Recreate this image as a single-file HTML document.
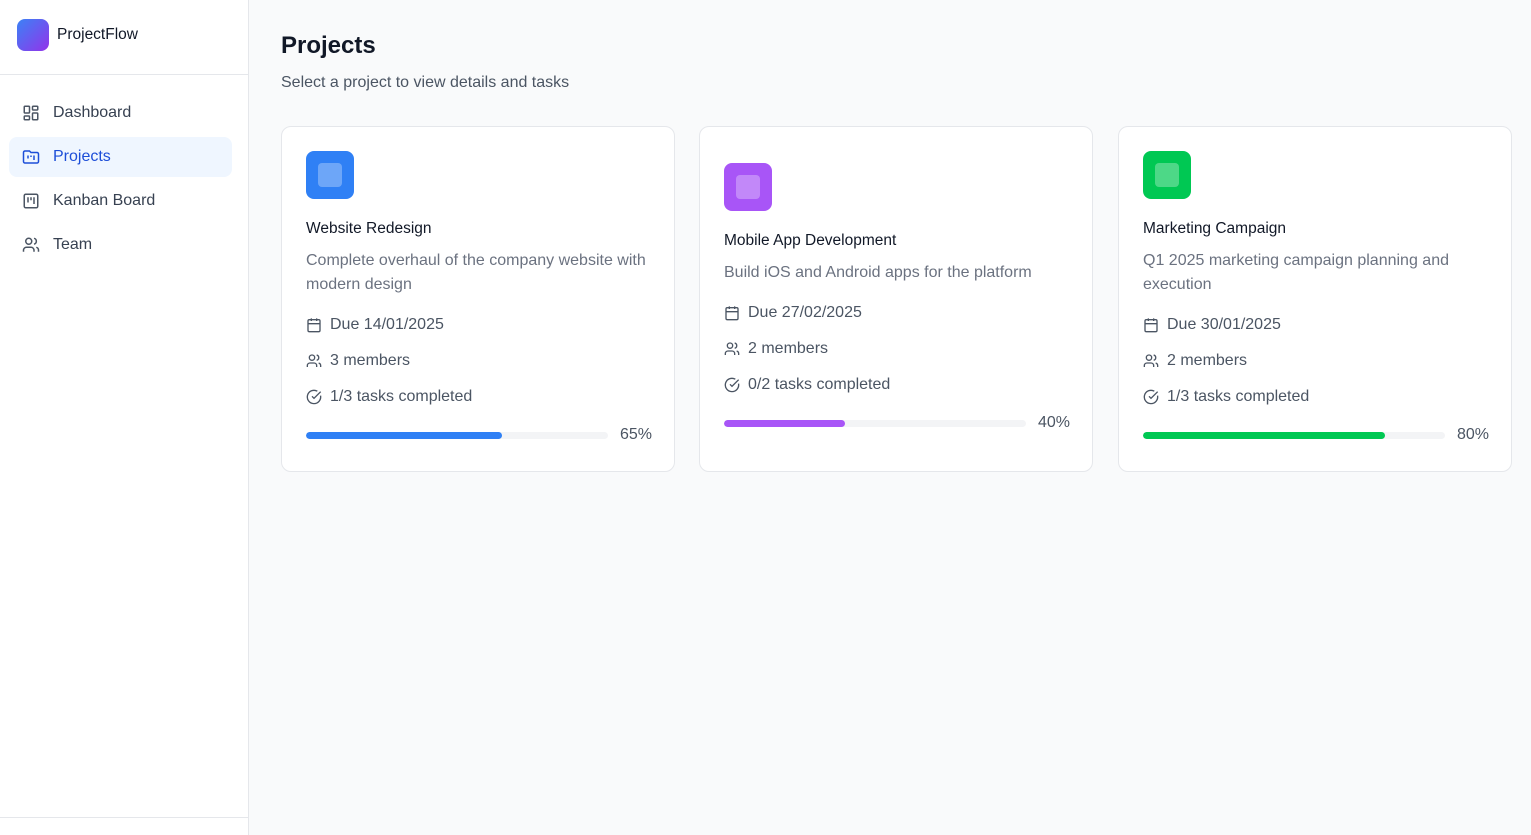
<!DOCTYPE html>
<html><head><style>
*{box-sizing:border-box;margin:0;padding:0}
body{width:1531px;height:835px;overflow:hidden;background:#f9fafb;font-family:"Liberation Sans",sans-serif;position:relative;color:#111827}
.side{position:absolute;left:0;top:0;width:249px;height:835px;background:#fff;border-right:1px solid #e5e7eb}
.logo{height:75px;border-bottom:1px solid #e5e7eb;display:flex;align-items:center;padding-left:17px;padding-bottom:4px}
.logo .sq{width:32px;height:32px;border-radius:8px;background:linear-gradient(135deg,#3b82f6,#9333ea);margin-right:8px}
.logo span{font-size:15.5px;color:#111827}
.nav{padding:18px 16px 17px 9px}
.item{height:40px;display:flex;align-items:center;padding-left:13px;margin-bottom:4px;border-radius:8px;font-size:16px;color:#374151}
.item svg{margin-right:13px}
.item.act{background:#eff6ff;color:#1d4ed8}
.foot{position:absolute;left:0;bottom:17px;width:248px;border-top:1px solid #e5e7eb}
.main{position:absolute;left:281px;top:0}
h1{font-size:24px;font-weight:600;position:absolute;top:32px;white-space:nowrap}
.sub{position:absolute;top:74px;font-size:16px;color:#4b5563;white-space:nowrap}
.card{position:absolute;top:126px;width:394px;height:346px;background:#fff;border:1px solid #e5e7eb;border-radius:10px;padding:24px 24px 0}
.ic{width:48px;height:48px;border-radius:8px;display:flex;align-items:center;justify-content:center;margin-bottom:20px}
.ic div{width:24px;height:24px;border-radius:4px;background:rgba(255,255,255,.3)}
.t{font-size:15.5px;line-height:20px;color:#111827;margin-bottom:10px}
.d{font-size:16px;color:#6b7280;line-height:24px;margin-bottom:10px}
.m{font-size:16px;color:#4b5563;height:36px;display:flex;align-items:center}
.m svg{margin-right:8px}
.pr{display:flex;align-items:center;margin-top:6px;height:28px}
.bar{width:302px;height:7px;border-radius:4px;background:#f3f4f6;margin-right:12px;overflow:hidden}
.bar div{height:100%;border-radius:4px}
.pct{font-size:16px;color:#4b5563;width:30px;text-align:right}
</style></head><body>
<div class="side">
<div class="logo"><div class="sq"></div><span>ProjectFlow</span></div>
<div class="nav">
<div class="item"><svg width="18" height="18" viewBox="0 0 24 24" fill="none" stroke="#4b5563" stroke-width="2"><rect x="3" y="3" width="7" height="9" rx="1"/><rect x="14" y="3" width="7" height="5" rx="1"/><rect x="14" y="12" width="7" height="9" rx="1"/><rect x="3" y="16" width="7" height="5" rx="1"/></svg>Dashboard</div>
<div class="item act"><svg width="18" height="18" viewBox="0 0 24 24" fill="none" stroke="#1d4ed8" stroke-width="2"><path d="M4 20h16a2 2 0 0 0 2-2V8a2 2 0 0 0-2-2h-8L10 4H4a2 2 0 0 0-2 2v12a2 2 0 0 0 2 2z"/><path d="M8 10v4M12 10v2M16 10v6"/></svg>Projects</div>
<div class="item"><svg width="18" height="18" viewBox="0 0 24 24" fill="none" stroke="#4b5563" stroke-width="2"><rect x="3" y="3" width="18" height="18" rx="2"/><path d="M8 7v7M12 7v4M16 7v9"/></svg>Kanban Board</div>
<div class="item"><svg width="18" height="18" viewBox="0 0 24 24" fill="none" stroke="#4b5563" stroke-width="2"><path d="M16 21v-2a4 4 0 0 0-4-4H6a4 4 0 0 0-4 4v2"/><circle cx="9" cy="7" r="4"/><path d="M22 21v-2a4 4 0 0 0-3-3.9M16 3.1a4 4 0 0 1 0 7.8"/></svg>Team</div>
</div>
<div class="foot"></div>
</div>
<div class="main"><h1>Projects</h1><div class="sub">Select a project to view details and tasks</div></div>

<div class="card" style="left:281px">
<div class="ic" style="background:#2f80f5"><div></div></div>
<div class="t">Website Redesign</div>
<div class="d">Complete overhaul of the company website with modern design</div>
<div class="m"><svg width="16" height="16" viewBox="0 0 24 24" fill="none" stroke="#4b5563" stroke-width="2"><rect x="3" y="4" width="18" height="18" rx="2"/><path d="M16 2v4M8 2v4M3 10h18"/></svg>Due 14/01/2025</div>
<div class="m"><svg width="16" height="16" viewBox="0 0 24 24" fill="none" stroke="#4b5563" stroke-width="2"><path d="M16 21v-2a4 4 0 0 0-4-4H6a4 4 0 0 0-4 4v2"/><circle cx="9" cy="7" r="4"/><path d="M22 21v-2a4 4 0 0 0-3-3.9M16 3.1a4 4 0 0 1 0 7.8"/></svg>3 members</div>
<div class="m"><svg width="16" height="16" viewBox="0 0 24 24" fill="none" stroke="#4b5563" stroke-width="2"><path d="M21.8 10A10 10 0 1 1 17 3.3"/><path d="M9 11l3 3L22 4"/></svg>1/3 tasks completed</div>
<div class="pr"><div class="bar"><div style="width:65%;background:#2f80f5"></div></div><div class="pct">65%</div></div>
</div>

<div class="card" style="left:699px;padding-top:36px">
<div class="ic" style="background:#a855f7"><div></div></div>
<div class="t">Mobile App Development</div>
<div class="d">Build iOS and Android apps for the platform</div>
<div class="m"><svg width="16" height="16" viewBox="0 0 24 24" fill="none" stroke="#4b5563" stroke-width="2"><rect x="3" y="4" width="18" height="18" rx="2"/><path d="M16 2v4M8 2v4M3 10h18"/></svg>Due 27/02/2025</div>
<div class="m"><svg width="16" height="16" viewBox="0 0 24 24" fill="none" stroke="#4b5563" stroke-width="2"><path d="M16 21v-2a4 4 0 0 0-4-4H6a4 4 0 0 0-4 4v2"/><circle cx="9" cy="7" r="4"/><path d="M22 21v-2a4 4 0 0 0-3-3.9M16 3.1a4 4 0 0 1 0 7.8"/></svg>2 members</div>
<div class="m"><svg width="16" height="16" viewBox="0 0 24 24" fill="none" stroke="#4b5563" stroke-width="2"><path d="M21.8 10A10 10 0 1 1 17 3.3"/><path d="M9 11l3 3L22 4"/></svg>0/2 tasks completed</div>
<div class="pr"><div class="bar"><div style="width:40%;background:#a855f7"></div></div><div class="pct">40%</div></div>
</div>

<div class="card" style="left:1118px">
<div class="ic" style="background:#00c853"><div></div></div>
<div class="t">Marketing Campaign</div>
<div class="d">Q1 2025 marketing campaign planning and execution</div>
<div class="m"><svg width="16" height="16" viewBox="0 0 24 24" fill="none" stroke="#4b5563" stroke-width="2"><rect x="3" y="4" width="18" height="18" rx="2"/><path d="M16 2v4M8 2v4M3 10h18"/></svg>Due 30/01/2025</div>
<div class="m"><svg width="16" height="16" viewBox="0 0 24 24" fill="none" stroke="#4b5563" stroke-width="2"><path d="M16 21v-2a4 4 0 0 0-4-4H6a4 4 0 0 0-4 4v2"/><circle cx="9" cy="7" r="4"/><path d="M22 21v-2a4 4 0 0 0-3-3.9M16 3.1a4 4 0 0 1 0 7.8"/></svg>2 members</div>
<div class="m"><svg width="16" height="16" viewBox="0 0 24 24" fill="none" stroke="#4b5563" stroke-width="2"><path d="M21.8 10A10 10 0 1 1 17 3.3"/><path d="M9 11l3 3L22 4"/></svg>1/3 tasks completed</div>
<div class="pr"><div class="bar"><div style="width:80%;background:#00c853"></div></div><div class="pct">80%</div></div>
</div>
</body></html>
